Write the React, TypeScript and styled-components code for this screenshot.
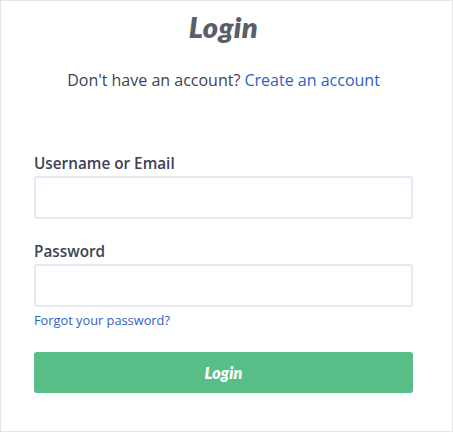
import styled, { createGlobalStyle } from "styled-components"

const GlobalStyle = createGlobalStyle`
  html, body {
    margin: 0;
    padding: 0;
    background: #ffffff;
  }
  * {
    box-sizing: border-box;
  }
`

const App = () => {
  return (
    <>
      <GlobalStyle />
      <Card>
        <Title>Login</Title>
        <Subtitle>
          Don't have an account? <TextLink href="#">Create an account</TextLink>
        </Subtitle>
        <Form onSubmit={(e) => e.preventDefault()}>
          <Field>
            <Label htmlFor="user">Username or Email</Label>
            <Input id="user" type="text" />
          </Field>
          <Field>
            <Label htmlFor="pass">Password</Label>
            <Input id="pass" type="password" />
          </Field>
          <Forgot href="#">Forgot your password?</Forgot>
          <Button type="submit">Login</Button>
        </Form>
      </Card>
    </>
  )
}

const Card = styled.div`
  width: 453px;
  height: 432px;
  border: 1.5px solid #e6e6e6;
  padding: 0 39px 0 33px;
  display: flex;
  flex-direction: column;
  font-family: "Open Sans", "Noto Sans", sans-serif;
  color: #3c4354;
`

const Title = styled.h1`
  margin: 9px 0 0;
  font-family: Lato, "Open Sans", sans-serif;
  font-size: 29px;
  line-height: 34px;
  font-weight: 800;
  font-style: italic;
  text-align: center;
  color: #5a5e6a;
  letter-spacing: 0.4px;
`

const Subtitle = styled.p`
  margin: 26px 0 0;
  font-size: 16px;
  line-height: 20px;
  text-align: center;
  color: #3c4354;
`

const TextLink = styled.a`
  color: #2f62c4;
  text-decoration: none;
`

const Form = styled.form`
  display: flex;
  flex-direction: column;
  margin-top: 63px;
`

const Field = styled.div`
  display: flex;
  flex-direction: column;
  & + & {
    margin-top: 22px;
  }
`

const Label = styled.label`
  font-size: 15.3px;
  line-height: 20px;
  font-weight: 600;
  color: #3c4354;
  margin-bottom: 3px;
`

const Input = styled.input`
  width: 100%;
  height: 43px;
  border: 2px solid #e4e9f4;
  border-radius: 3px;
  padding: 0 12px;
  font-size: 15px;
  outline: none;
`

const Forgot = styled.a`
  margin-top: 5px;
  font-size: 12.8px;
  line-height: 17px;
  color: #2f62c4;
  text-decoration: none;
  align-self: flex-start;
`

const Button = styled.button`
  margin-top: 23px;
  height: 41px;
  width: 100%;
  border: none;
  border-radius: 3px;
  background: #56be86;
  color: #ffffff;
  font-family: Lato, "Open Sans", sans-serif;
  font-size: 16px;
  font-weight: 800;
  font-style: italic;
  letter-spacing: 0.2px;
  cursor: pointer;
`

export default App
